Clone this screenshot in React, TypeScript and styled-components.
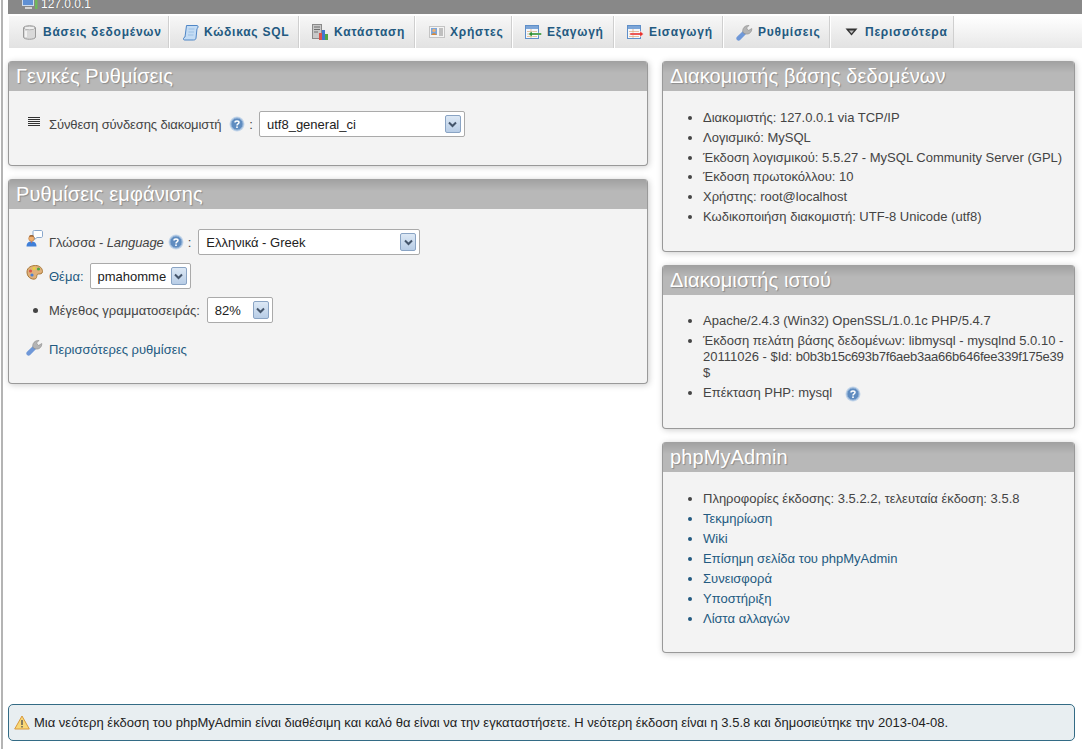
import React from "react";
import styled, { createGlobalStyle } from "styled-components";

const Global = createGlobalStyle`
  html, body { margin:0; padding:0; background:#fff; }
  body { font-family:"Liberation Sans", Arial, sans-serif; font-size:13px; color:#444; overflow:hidden; }
`;

const Page = styled.div`
  width:1081px;
  height:749px;
  margin-left:1px;
  box-sizing:border-box;
  border-left:2px solid #b4b4b4;
  padding-left:5px;
  overflow:hidden;
`;

const ServerBar = styled.div`
  height:14px;
  background:#888;
  color:#fff;
  display:flex;
  align-items:flex-end;
  padding-left:14px;
  gap:3px;
  overflow:hidden;
`;

const ServerText = styled.span`
  margin-bottom:4px;
  font-size:12px;
  line-height:12px;
  text-shadow:0 0 1px #555;
`;

const TabBar = styled.div`
  display:flex;
  height:32px;
  margin-top:2px;
  background:linear-gradient(#fff, #e8e8e8);
`;

const Tab = styled.a<{ $w: number }>`
  width:${(p) => p.$w}px;
  box-sizing:border-box;
  display:flex;
  align-items:center;
  gap:5px;
  padding-left:12px;
  background:linear-gradient(#f7f7f7, #e2e2e2);
  border-right:1px solid #cfcfcf;
  border-left:1px solid #fff;
  font-weight:bold;
  font-size:12px;
  letter-spacing:0.75px;
  color:#235a81;
  white-space:nowrap;
`;

const TabIcon = styled.span`
  width:17px;
  flex:none;
  display:flex;
  justify-content:center;
`;

const Columns = styled.div`
  display:flex;
  gap:14px;
  margin-top:13px;
  height:643px;
`;

const LeftColumn = styled.div`
  width:640px;
  display:flex;
  flex-direction:column;
  gap:13px;
`;

const RightColumn = styled.div`
  width:413px;
  display:flex;
  flex-direction:column;
  gap:13px;
`;

const Panel = styled.section<{ $h: number }>`
  height:${(p) => p.$h}px;
  box-sizing:border-box;
  background:#f3f3f3;
  border:1px solid #999;
  border-top:0;
  border-radius:4px;
  box-shadow:1px 1px 6px #ccc;
  overflow:hidden;
`;

const PanelTitle = styled.h2`
  margin:0 -1px;
  height:30px;
  padding-left:8px;
  background:linear-gradient(#a0a0a0, #b8b8b8 40%, #b8b8b8);
  color:#fff;
  font-weight:normal;
  font-size:20px;
  letter-spacing:0.1px;
  line-height:31px;
  text-shadow:1px 1px 1px #8a8a8a;
  white-space:nowrap;
`;

const FormList = styled.div`
  display:flex;
  flex-direction:column;
  padding:16px 0 0 16px;
`;

const FormRow = styled.div<{ $h?: number }>`
  display:flex;
  align-items:center;
  height:${(p) => p.$h ?? 34}px;
  white-space:nowrap;
`;

const IconSlot = styled.span<{ $left?: number; $up?: number }>`
  width:24px;
  box-sizing:border-box;
  flex:none;
  display:flex;
  padding-left:${(p) => p.$left ?? 1}px;
  margin-bottom:${(p) => p.$up ?? 0}px;
`;

const Label = styled.span<{ $narrow?: boolean; $right?: number }>`
  font-size:13px;
  margin-right:${(p) => p.$right ?? 5}px;
  letter-spacing:${(p) => (p.$narrow ? "-0.11px" : "0")};
`;

const LinkLabel = styled(Label)`
  color:#235a81;
  margin-right:3px;
`;

const Colon = styled.span<{ $right: number }>`
  margin:0 ${(p) => p.$right}px 0 4px;
`;

const Select = styled.div<{ $w: number }>`
  width:${(p) => p.$w}px;
  height:26px;
  box-sizing:border-box;
  display:flex;
  align-items:center;
  justify-content:space-between;
  padding:0 3px 0 7px;
  background:#fff;
  border:1px solid #aaa;
  border-radius:2px;
  color:#222;
  font-size:13px;
  margin-left:3px;
`;

const SelectArrow = styled.span`
  width:16px;
  height:18px;
  box-sizing:border-box;
  flex:none;
  display:flex;
  align-items:center;
  justify-content:center;
  border:1px solid #8aa4c4;
  border-radius:2px;
  background:linear-gradient(#dce8f5, #b8cde6);
`;

const InfoList = styled.ul<{ $top?: number; $line?: number }>`
  margin:0;
  padding:${(p) => p.$top ?? 16}px 0 0 40px;
  list-style:disc;
  font-size:13px;
  line-height:${(p) => p.$line ?? 20}px;
`;

const Info = styled.li`
  color:#444;
`;

const TightInfo = styled(Info)`
  line-height:16px;
  padding:2px 0;
`;

const Hash = styled.span`
  letter-spacing:-0.25px;
`;

const InfoLink = styled.li`
  color:#235a81;
`;

const InlineHelp = styled.span`
  margin-left:9px;
  display:inline-block;
  vertical-align:-5px;
  line-height:0;
`;

const Notice = styled.div`
  width:1067px;
  height:37px;
  box-sizing:border-box;
  display:flex;
  align-items:center;
  gap:4px;
  padding-left:5px;
  background:#e8eef1;
  border:1px solid #336b85;
  border-radius:5px;
  color:#222;
  font-size:13px;
  white-space:nowrap;
`;

const Arrow = () => (
  <svg width="9" height="7" viewBox="0 0 9 7">
    <path d="M1 1.5 4.5 5 8 1.5" fill="none" stroke="#44556b" strokeWidth="2" />
  </svg>
);

const Help = () => (
  <svg width="16" height="16" viewBox="0 0 16 16" style={{ flex: "none" }}>
    <circle cx="8" cy="8" r="7.5" fill="#c4d6ea" />
    <circle cx="8" cy="8" r="6" fill="#5f8cc0" stroke="#8fb0d6" />
    <path d="M6 6.4C6 4.4 10 4.4 10 6.4 10 8 8 7.8 8 9.4" fill="none" stroke="#fff" strokeWidth="1.5" />
    <rect x="7.2" y="10.4" width="1.6" height="1.6" fill="#fff" />
  </svg>
);

const DbIcon = () => (
  <svg width="13" height="15" viewBox="0 0 13 15">
    <path d="M0.5 3C0.5 0 12.5 0 12.5 3V12C12.5 15 0.5 15 0.5 12Z" fill="#d9d9d9" stroke="#9a9a9a" />
    <ellipse cx="6.5" cy="3" rx="5.5" ry="1.8" fill="#f0f0f0" stroke="#b4b4b4" />
    <path d="M3 6V12" stroke="#f2f2f2" strokeWidth="2" />
  </svg>
);

const SqlIcon = () => (
  <svg width="16" height="17" viewBox="0 0 16 17">
    <path d="M3.5 1.5H14C15.5 1.5 15.5 4 14 4.5L13 14C12.8 15.5 12 16 10.5 16H1.5C0 16 0 13.5 2 13Z" fill="#c4dcf4" stroke="#4f86c6" />
    <path d="M5.5 5H11.5M5.5 8H11M5 11H10.5" stroke="#9cc0e4" />
  </svg>
);

const StatusIcon = () => (
  <svg width="17" height="17" viewBox="0 0 17 17">
    <rect x="0.5" y="0.5" width="9" height="14" fill="#c8c8c8" stroke="#8a8a8a" />
    <path d="M2 3H8M2 5.5H8M2 8H6" stroke="#6f6f6f" />
    <rect x="7" y="9" width="3" height="7" fill="#d9534a" />
    <rect x="10" y="6" width="3" height="10" fill="#3f78d0" />
    <rect x="13" y="10" width="3" height="6" fill="#4fa544" />
  </svg>
);

const UsersIcon = () => (
  <svg width="16" height="12" viewBox="0 0 16 12">
    <rect x="0.5" y="0.5" width="15" height="11" fill="#f4f4f4" stroke="#c4c4c4" />
    <rect x="2" y="2" width="6" height="7" fill="#7aa6dc" />
    <circle cx="5" cy="4.4" r="1.7" fill="#f0b070" />
    <path d="M2.5 9C2.5 6.6 7.5 6.6 7.5 9Z" fill="#d88838" />
    <path d="M10 3H14M10 5H14M10 7H14M10 9H14" stroke="#8a8a8a" />
  </svg>
);

const TableArrowIcon = ({ kind }: { kind: "export" | "import" }) => (
  <svg width="17" height="15" viewBox="0 0 17 15">
    <rect x="0.5" y="0.5" width="13" height="13" fill="#f4f8fc" stroke="#5f8fc8" />
    <rect x="1" y="1" width="12" height="3" fill="#7da6d8" />
    <path d="M2 6.5H12M2 9H12M2 11.5H12M6 4V13" stroke="#e0a878" strokeWidth="0.7" />
    {kind === "import" ? (
      <path d="M3 8H13V6L16.5 9 13 12V10H3Z" fill="#e8302c" stroke="#fff" strokeWidth="0.4" />
    ) : (
      <path d="M16.5 8H7V6L3.5 9 7 12V10H16.5Z" fill="#2f8f30" stroke="#fff" strokeWidth="0.4" />
    )}
  </svg>
);

const WrenchIcon = () => (
  <svg width="17" height="17" viewBox="0 0 17 17">
    <path d="M2.6 14.4 8 9" stroke="#6f98d8" strokeWidth="4.4" strokeLinecap="round" />
    <path d="M7 8.5C5.8 4.5 9 1 13 1.5L10.5 4 12.5 6.5 15.8 4.5C16 8.5 12.5 11 9 9.8Z" fill="#b4b4b4" stroke="#8a8a8a" strokeWidth="0.6" />
  </svg>
);

const MoreIcon = () => (
  <svg width="13" height="8" viewBox="0 0 13 8">
    <path d="M0.5 0.5H12.5L6.5 7.5Z" fill="#333" />
    <path d="M4 2.5H9L6.5 5.5Z" fill="#bbb" />
  </svg>
);

const ListIcon = () => (
  <svg width="12" height="10" viewBox="0 0 12 10">
    <path d="M0 .5H12M0 2.5H12M0 4.5H12M0 6.5H12M0 8.5H12" stroke="#333" />
  </svg>
);

const LangIcon = () => (
  <svg width="17" height="17" viewBox="0 0 17 17">
    <path d="M7 1.5C7 0.5 8 0.5 9 0.5H15C16 0.5 16.5 1 16.5 2V6C16.5 7 16 7.5 15 7.5H11L8.5 9.5V7.5C7.5 7.5 7 7 7 6Z" fill="#fff" stroke="#8aa8cc" />
    <circle cx="5.5" cy="8.5" r="2.8" fill="#f0b070" stroke="#a8682c" strokeWidth="0.5" />
    <path d="M3 6.5C3 4.8 8 4.8 8 6.5Z" fill="#8a5020" />
    <path d="M0.5 16.5C0.5 12.5 3 11.5 5.5 11.5S10.5 12.5 10.5 16.5Z" fill="#3f7fd8" />
    <path d="M4.5 11.5H6.5L5.5 13Z" fill="#e86a2c" />
  </svg>
);

const ThemeIcon = () => (
  <svg width="17" height="15" viewBox="0 0 17 15">
    <path d="M1 7C1 2 6 .5 9.5 .5 14 .5 16.5 3.5 16.5 6.5 16.5 9 14 9 12.5 9 10.5 9 11 11 10.5 12.5 10 14.5 7 14.5 5 13.5 2.5 12.5 1 10 1 7Z" fill="#dfb07a" stroke="#a87838" />
    <circle cx="4.5" cy="6" r="1.6" fill="#d9534a" />
    <circle cx="8" cy="3.4" r="1.6" fill="#e8d040" />
    <circle cx="12.5" cy="4" r="1.6" fill="#4fa544" />
    <circle cx="6" cy="10" r="1.6" fill="#4a7fd0" />
  </svg>
);

const WarnIcon = () => (
  <svg width="16" height="15" viewBox="0 0 16 15">
    <path d="M8 1 15.3 14H0.7Z" fill="#f8d878" stroke="#d8983c" strokeLinejoin="round" />
    <path d="M8 5V10M8 11V12.6" stroke="#555" strokeWidth="1.4" />
  </svg>
);

const MonitorIcon = () => (
  <svg width="16" height="13" viewBox="0 0 16 13" style={{ marginBottom: 5 }}>
    <rect x="0.5" y="0.5" width="11" height="9" fill="#5f90d4" stroke="#cfdcec" />
    <rect x="3" y="11" width="7" height="2" fill="#d4d4d4" />
    <rect x="13" y="3" width="2.5" height="10" fill="#6fb85a" />
  </svg>
);

const App = () => {
  return (
    <Page>
      <Global />
      <ServerBar>
        <MonitorIcon />
        <ServerText>127.0.0.1</ServerText>
      </ServerBar>
      <TabBar>
        <Tab $w={161}><TabIcon><DbIcon /></TabIcon>Βάσεις δεδομένων</Tab>
        <Tab $w={130}><TabIcon><SqlIcon /></TabIcon>Κώδικας SQL</Tab>
        <Tab $w={116}><TabIcon><StatusIcon /></TabIcon>Κατάσταση</Tab>
        <Tab $w={97}><TabIcon><UsersIcon /></TabIcon>Χρήστες</Tab>
        <Tab $w={102}><TabIcon><TableArrowIcon kind="export" /></TabIcon>Εξαγωγή</Tab>
        <Tab $w={109}><TabIcon><TableArrowIcon kind="import" /></TabIcon>Εισαγωγή</Tab>
        <Tab $w={107}><TabIcon><WrenchIcon /></TabIcon>Ρυθμίσεις</Tab>
        <Tab $w={124}><TabIcon><MoreIcon /></TabIcon>Περισσότερα</Tab>
      </TabBar>
      <Columns>
        <LeftColumn>
          <Panel $h={105}>
            <PanelTitle>Γενικές Ρυθμίσεις</PanelTitle>
            <FormList>
              <FormRow>
                <IconSlot $left={3} $up={5}><ListIcon /></IconSlot>
                <Label $narrow $right={8}>Σύνθεση σύνδεσης διακομιστή</Label>
                <Help />
                <Colon $right={3}>:</Colon>
                <Select $w={206}>utf8_general_ci<SelectArrow><Arrow /></SelectArrow></Select>
              </FormRow>
            </FormList>
          </Panel>
          <Panel $h={205}>
            <PanelTitle>Ρυθμίσεις εμφάνισης</PanelTitle>
            <FormList>
              <FormRow>
                <IconSlot $up={8}><LangIcon /></IconSlot>
                <Label $narrow $right={4}>Γλώσσα - <i>Language</i></Label>
                <Help />
                <Colon $right={4}>:</Colon>
                <Select $w={222}>Ελληνικά - Greek<SelectArrow><Arrow /></SelectArrow></Select>
              </FormRow>
              <FormRow>
                <IconSlot $up={8}><ThemeIcon /></IconSlot>
                <LinkLabel>Θέμα:</LinkLabel>
                <Select $w={101}>pmahomme<SelectArrow><Arrow /></SelectArrow></Select>
              </FormRow>
              <FormRow>
                <IconSlot $left={8}><svg width="5" height="5"><circle cx="2.5" cy="2.5" r="2.5" fill="#444" /></svg></IconSlot>
                <Label $right={4}>Μέγεθος γραμματοσειράς:</Label>
                <Select $w={66}>82%<SelectArrow><Arrow /></SelectArrow></Select>
              </FormRow>
              <FormRow $h={44}>
                <IconSlot $up={4}><WrenchIcon /></IconSlot>
                <LinkLabel>Περισσότερες ρυθμίσεις</LinkLabel>
              </FormRow>
            </FormList>
          </Panel>
        </LeftColumn>
        <RightColumn>
          <Panel $h={191}>
            <PanelTitle>Διακομιστής βάσης δεδομένων</PanelTitle>
            <InfoList $top={17} $line={19.8}>
              <Info>Διακομιστής: 127.0.0.1 via TCP/IP</Info>
              <Info>Λογισμικό: MySQL</Info>
              <Info>Έκδοση λογισμικού: 5.5.27 - MySQL Community Server (GPL)</Info>
              <Info>Έκδοση πρωτοκόλλου: 10</Info>
              <Info>Χρήστης: root@localhost</Info>
              <Info>Κωδικοποιήση διακομιστή: UTF-8 Unicode (utf8)</Info>
            </InfoList>
          </Panel>
          <Panel $h={164}>
            <PanelTitle>Διακομιστής ιστού</PanelTitle>
            <InfoList>
              <Info>Apache/2.4.3 (Win32) OpenSSL/1.0.1c PHP/5.4.7</Info>
              <TightInfo>Έκδοση πελάτη βάσης δεδομένων: libmysql - mysqlnd 5.0.10 - 20111026 - $Id: <Hash>b0b3b15c693b7f6aeb3aa66b646fee339f175e39</Hash> $</TightInfo>
              <Info>Επέκταση PHP: mysql <InlineHelp><Help /></InlineHelp></Info>
            </InfoList>
          </Panel>
          <Panel $h={211}>
            <PanelTitle>phpMyAdmin</PanelTitle>
            <InfoList $top={17}>
              <Info>Πληροφορίες έκδοσης: 3.5.2.2, τελευταία έκδοση: 3.5.8</Info>
              <InfoLink>Τεκμηρίωση</InfoLink>
              <InfoLink>Wiki</InfoLink>
              <InfoLink>Επίσημη σελίδα του phpMyAdmin</InfoLink>
              <InfoLink>Συνεισφορά</InfoLink>
              <InfoLink>Υποστήριξη</InfoLink>
              <InfoLink>Λίστα αλλαγών</InfoLink>
            </InfoList>
          </Panel>
        </RightColumn>
      </Columns>
      <Notice>
        <WarnIcon />
        Μια νεότερη έκδοση του phpMyAdmin είναι διαθέσιμη και καλό θα είναι να την εγκαταστήσετε. Η νεότερη έκδοση είναι η 3.5.8 και δημοσιεύτηκε την 2013-04-08.
      </Notice>
    </Page>
  );
};

export default App;
